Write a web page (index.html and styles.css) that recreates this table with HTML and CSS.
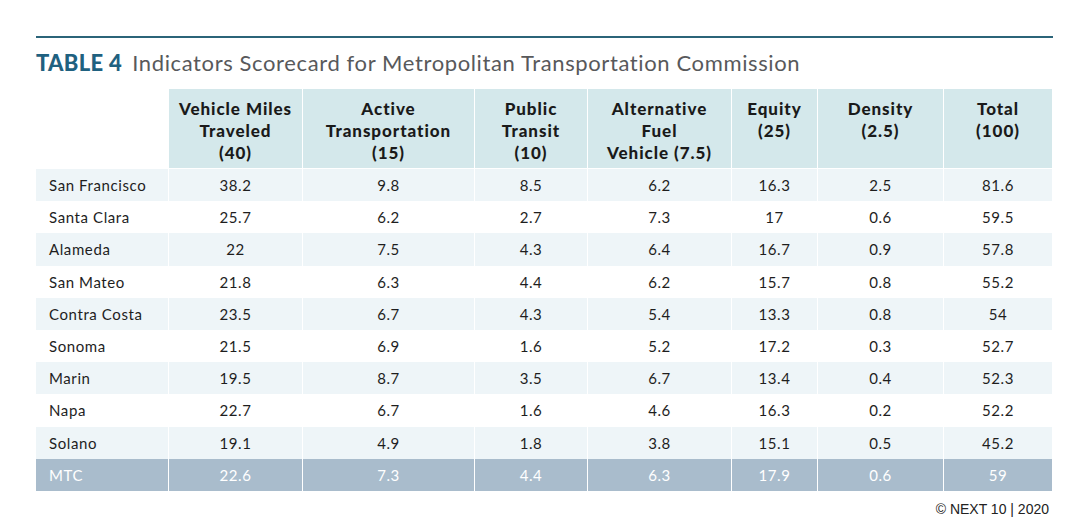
FILE: index.html
```html
<!DOCTYPE html>
<html>
<head>
<meta charset="utf-8">
<link rel="stylesheet" href="styles.css">
</head>
<body>
<div class="page">
  <div class="rule"></div>
  <h1 class="title"><span class="label">TABLE 4</span> Indicators Scorecard for Metropolitan Transportation Commission</h1>
  <table class="score">
    <colgroup>
      <col style="width:132px"><col style="width:134px"><col style="width:172px"><col style="width:113px"><col style="width:144px"><col style="width:86px"><col style="width:126px"><col style="width:109px">
    </colgroup>
    <thead>
      <tr>
        <th class="blank"></th>
        <th>Vehicle Miles<br>Traveled<br>(40)</th>
        <th>Active<br>Transportation<br>(15)</th>
        <th>Public<br>Transit<br>(10)</th>
        <th>Alternative<br>Fuel<br>Vehicle (7.5)</th>
        <th>Equity<br>(25)</th>
        <th>Density<br>(2.5)</th>
        <th>Total<br>(100)</th>
      </tr>
    </thead>
    <tbody>
      <tr><td>San Francisco</td><td>38.2</td><td>9.8</td><td>8.5</td><td>6.2</td><td>16.3</td><td>2.5</td><td>81.6</td></tr>
      <tr><td>Santa Clara</td><td>25.7</td><td>6.2</td><td>2.7</td><td>7.3</td><td>17</td><td>0.6</td><td>59.5</td></tr>
      <tr><td>Alameda</td><td>22</td><td>7.5</td><td>4.3</td><td>6.4</td><td>16.7</td><td>0.9</td><td>57.8</td></tr>
      <tr><td>San Mateo</td><td>21.8</td><td>6.3</td><td>4.4</td><td>6.2</td><td>15.7</td><td>0.8</td><td>55.2</td></tr>
      <tr><td>Contra Costa</td><td>23.5</td><td>6.7</td><td>4.3</td><td>5.4</td><td>13.3</td><td>0.8</td><td>54</td></tr>
      <tr><td>Sonoma</td><td>21.5</td><td>6.9</td><td>1.6</td><td>5.2</td><td>17.2</td><td>0.3</td><td>52.7</td></tr>
      <tr><td>Marin</td><td>19.5</td><td>8.7</td><td>3.5</td><td>6.7</td><td>13.4</td><td>0.4</td><td>52.3</td></tr>
      <tr><td>Napa</td><td>22.7</td><td>6.7</td><td>1.6</td><td>4.6</td><td>16.3</td><td>0.2</td><td>52.2</td></tr>
      <tr><td>Solano</td><td>19.1</td><td>4.9</td><td>1.8</td><td>3.8</td><td>15.1</td><td>0.5</td><td>45.2</td></tr>
      <tr class="total"><td>MTC</td><td>22.6</td><td>7.3</td><td>4.4</td><td>6.3</td><td>17.9</td><td>0.6</td><td>59</td></tr>
    </tbody>
  </table>
  <div class="credit">© NEXT 10 | 2020</div>
</div>
</body>
</html>
```

FILE: styles.css
```css
html, body {
  margin: 0;
  padding: 0;
  background: #ffffff;
}
.page {
  width: 1016px;
  padding: 36px 0 0 36px;
  font-family: "Lato", "Open Sans", sans-serif;
}
.rule {
  height: 2px;
  background: #2b6479;
  width: 1017px;
}
.title {
  margin: 0;
  padding-top: 11px;
  height: 40px;
  font-size: 22px;
  font-weight: 400;
  line-height: 28px;
  color: #58595b;
  letter-spacing: 0.62px;
  white-space: nowrap;
}
.title .label {
  font-weight: 900;
  color: #1f6180;
  margin-right: 4px;
  letter-spacing: 0.3px;
}
.score {
  border-collapse: separate;
  border-spacing: 0;
  table-layout: fixed;
  width: 1016px;
  margin-top: 0;
}
.score th {
  background: #d4e8eb;
  color: #1a1a1a;
  font-weight: 900;
  font-size: 17px;
  line-height: 22px;
  text-align: center;
  vertical-align: top;
  padding: 9px 0 0;
  height: 70px;
  border-left: 1px solid #fff;
  border-bottom: 1px solid #fff;
  letter-spacing: 0.95px;
}
.score th.blank {
  background: #fff;
  border-left: 0;
}
.score td {
  height: 32.2px;
  padding: 0;
  font-size: 15px;
  color: #1e1e1e;
  text-align: center;
  border-left: 1px solid #fff;
  letter-spacing: 0.6px;
}
.score td:first-child {
  text-align: left;
  padding-left: 13px;
  border-left: 0;
}
.score tbody tr:nth-child(odd) td {
  background: #eef5f8;
}
.score tbody tr.total td {
  background: #a9bccc;
  color: #ffffff;
}
.credit {
  font-family: "Liberation Sans", Arial, sans-serif;
  font-size: 14px;
  color: #222;
  text-align: right;
  margin-top: 10px;
  padding-right: 3px;
}
```
